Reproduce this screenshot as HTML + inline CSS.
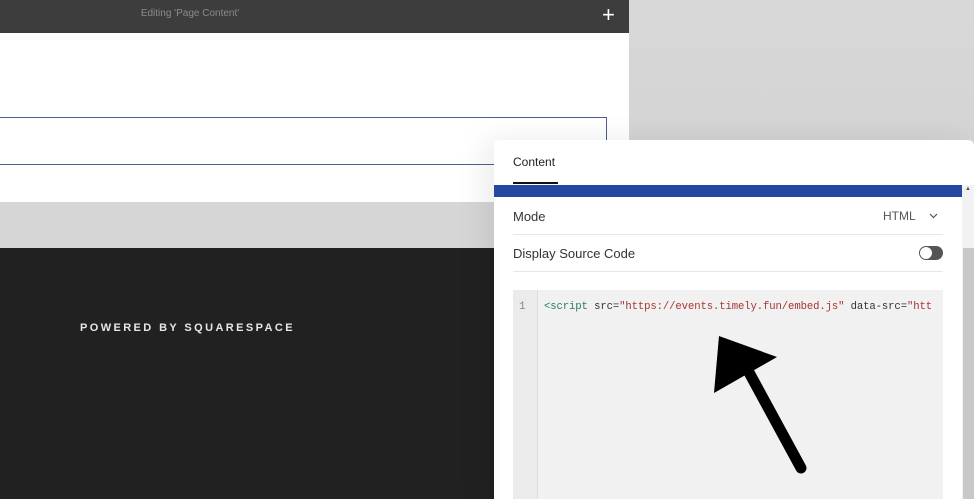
<!DOCTYPE html><html><head><style>
body{margin:0;width:974px;height:499px;position:relative;overflow:hidden;font-family:"Liberation Sans",sans-serif;background:#d6d6d6}
div{position:absolute;box-sizing:border-box}
</style></head><body>
<div style="left:0;top:0;width:629px;height:33px;background:#3d3d3d"></div>
<div style="left:0;top:8px;width:380px;text-align:center;color:#8a8a8a;font-size:10px">Editing 'Page Content'</div>
<div style="left:602px;top:2px;color:#fff;font-size:22px;font-weight:300">+</div>
<div style="left:629px;top:0;width:345px;height:140px;background:linear-gradient(#d8d8d8,#d4d4d4)"></div>
<div style="left:0;top:33px;width:629px;height:169px;background:#fff"></div>
<div style="left:-2px;top:117px;width:609px;height:48px;border:1px solid #4a5f8f"></div>
<div style="left:0;top:202px;width:629px;height:46px;background:#d6d6d6"></div>
<div style="left:0;top:248px;width:629px;height:251px;background:#212121"></div>
<div style="left:80px;top:322px;color:#e6e6e6;font-size:11px;font-weight:bold;letter-spacing:2.4px">POWERED BY SQUARESPACE</div>
<div style="left:494px;top:140px;width:480px;height:359px;background:#fff;border-radius:6px 6px 0 0;box-shadow:-10px 0 30px rgba(0,0,0,.08)"></div>
<div style="left:513px;top:155px;font-size:12px;color:#222">Content</div>
<div style="left:513px;top:182px;width:45px;height:2px;background:#111"></div>
<div style="left:494px;top:185px;width:468px;height:12px;background:#2548a0"></div>
<div style="left:962px;top:185px;width:12px;height:314px;background:#f2f2f2"></div>
<div style="left:963px;top:248px;width:11px;height:251px;background:#c8c8c8"></div>
<div style="left:965px;top:186px;font-size:6px;color:#555">▲</div>
<div style="left:513px;top:209px;font-size:13px;color:#333">Mode</div>
<div style="left:883px;top:209px;font-size:12px;color:#555">HTML</div>
<svg style="position:absolute;left:929px;top:213px" width="9" height="6"><polyline points="1,1 4.5,4.5 8,1" fill="none" stroke="#555" stroke-width="1.2"/></svg>
<div style="left:513px;top:234px;width:430px;height:1px;background:#e6e6e6"></div>
<div style="left:513px;top:246px;font-size:13px;color:#333">Display Source Code</div>
<div style="left:919px;top:246px;width:24px;height:14px;border-radius:7px;background:#555"></div>
<div style="left:920px;top:247px;width:12px;height:12px;border-radius:6px;background:#fff"></div>
<div style="left:513px;top:271px;width:430px;height:1px;background:#e6e6e6"></div>
<div style="left:513px;top:290px;width:430px;height:209px;background:#f1f1f1"></div>
<div style="left:513px;top:290px;width:25px;height:209px;background:#ebebeb;border-right:1px solid #ddd"></div>
<div style="left:519px;top:301px;font-family:'Liberation Mono',monospace;font-size:11px;color:#888">1</div>
<div style="left:544px;top:301px;font-family:'Liberation Mono',monospace;font-size:10.6px;letter-spacing:-0.1px;color:#333;white-space:nowrap;width:399px;overflow:hidden"><span style="color:#2a7a6a">&lt;script</span> src=<span style="color:#a33">"https://events.timely.fun/embed.js"</span> data-src=<span style="color:#a33">"htt</span></div>
<svg style="position:absolute;left:0;top:0" width="974" height="499"><polygon points="714,393 719,336 777,357" fill="#000"/><line x1="745" y1="365" x2="801" y2="468" stroke="#000" stroke-width="11" stroke-linecap="round"/></svg>
</body></html>
